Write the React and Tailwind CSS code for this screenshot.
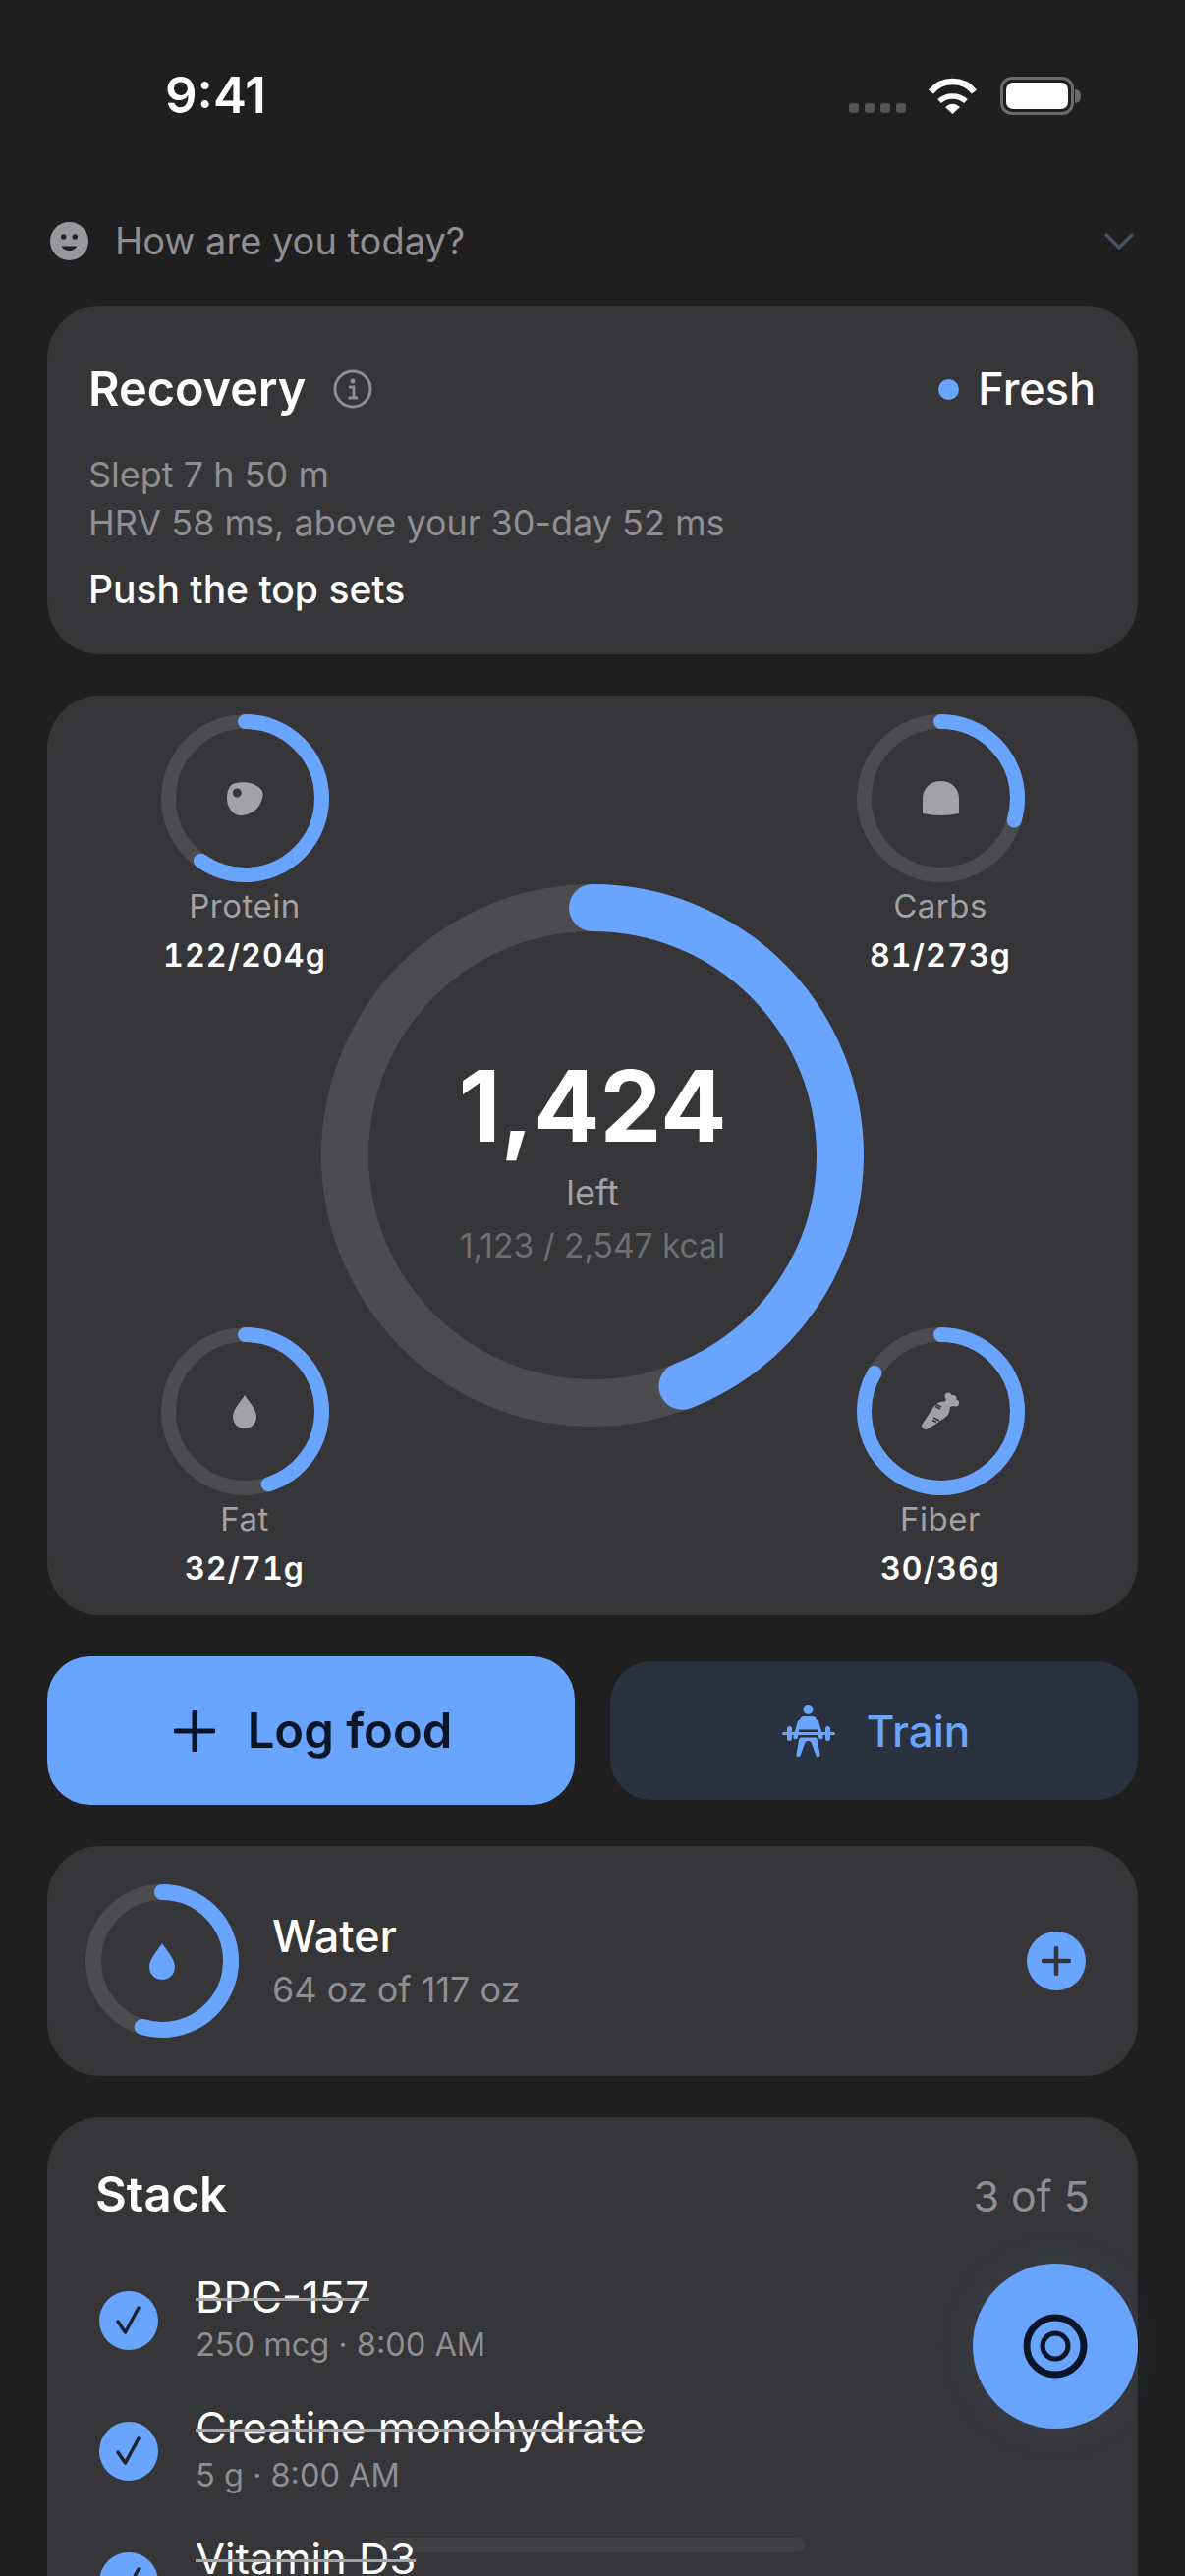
const Ring = ({ size, stroke, value, children }) => {
  const r = (size - stroke) / 2;
  return (
    <div className="relative flex shrink-0 items-center justify-center" style={{ width: size, height: size }}>
      <svg width={size} height={size} className="absolute inset-0 -rotate-90">
        <circle cx={size / 2} cy={size / 2} r={r} fill="none" stroke="#4c4c4f" strokeWidth={stroke} />
        <circle
          cx={size / 2}
          cy={size / 2}
          r={r}
          fill="none"
          stroke="#69a4ff"
          strokeWidth={stroke}
          strokeLinecap="round"
          pathLength={100}
          strokeDasharray={`${value * 100} 100`}
        />
      </svg>
      {children}
    </div>
  );
};

const Drop = ({ w, h, color }) => (
  <svg width={w} height={h} viewBox="0 0 24 34">
    <path d="M12 0C14 4 24 14 24 22C24 29 18.500 34 12 34C5.500 34 0 29 0 22C0 14 10 4 12 0Z" fill={color} />
  </svg>
);

const Macro = ({ label, amount, value, icon }) => (
  <div className="flex w-[200px] flex-col items-center">
    <Ring size={171} stroke={15} value={value}>
      {icon}
    </Ring>
    <div className="mt-1.5 text-[33px] leading-9 tracking-[0.5px] text-[#a1a1a6]">{label}</div>
    <div className="mt-[15px] text-[32px] leading-9 font-semibold tracking-[1.2px] whitespace-nowrap text-white tabular-nums">{amount}</div>
  </div>
);

const MeatIcon = () => (
  <svg width="37" height="34" viewBox="0 0 37 34">
    <path
      fillRule="evenodd"
      d="M5.700 2C11 0 17 0 22 0.700C27 1.500 31 3.500 34 6.700C36.500 9 37 12 36.300 15C35.500 19.500 33.500 23.500 30.700 26.700C26.500 31 20 34 14 34C9 34 5 31 3 27.300C1 24 0 20.500 0 16.700C0 11 1.500 5 5.700 2ZM10.300 6.500A4.500 4.500 0 1 0 10.310 6.500Z"
      fill="#a1a1a6"
    />
  </svg>
);

const BreadIcon = () => (
  <svg width="37" height="35" viewBox="0 0 37 35">
    <path d="M0 18C0 7 8 0 18.500 0C29 0 37 7 37 18V33C26 35.500 11 35.500 0 33Z" fill="#a1a1a6" />
  </svg>
);

const CarrotIcon = () => (
  <svg width="39" height="39" viewBox="0 0 39 39">
    <path
      d="M0.800 36C-0.500 34.500 0.200 33 1.500 31L13 14C16 9.500 24 8 27 11C30 14 29 21 25 25C18 30 9 36 5 38C3.500 38.500 2 37.500 0.800 36Z"
      fill="#a1a1a6"
    />
    <circle cx="27" cy="4" r="3.500" fill="#a1a1a6" />
    <circle cx="32" cy="6.500" r="3.500" fill="#a1a1a6" />
    <circle cx="34.500" cy="11" r="3.500" fill="#a1a1a6" />
    <circle cx="29" cy="10" r="5" fill="#a1a1a6" />
    <path d="M13 11.500L20 15M14 14.500L19 17M12 26L18 29M11 28.500L15 30.500" stroke="#363639" strokeWidth="1.800" fill="none" />
  </svg>
);

const LifterIcon = () => (
  <svg width="54" height="54" viewBox="0 0 54 54" fill="#69a4ff">
    <circle cx="26.500" cy="5" r="5" />
    <path d="M22 12H31C33 12 34 13 35 15L38 26H15L18 15C19 13 20 12 22 12Z" />
    <path d="M18 18L13.500 33M35 18L39.500 33" stroke="#69a4ff" strokeWidth="4.500" strokeLinecap="round" fill="none" />
    <rect x="17" y="25.500" width="19" height="2.500" fill="#2a3240" />
    <rect x="0" y="28" width="54" height="3" rx="1.500" />
    <rect x="5" y="22" width="5" height="15" rx="2.500" />
    <rect x="44" y="22" width="5" height="15" rx="2.500" />
    <path d="M19 33.500H34C35 33.500 35.500 34.500 35.800 35.500L38.500 50.500C39 53.500 35 54 34.300 51.500L29.500 38.500C28.500 36.500 24.500 36.500 23.500 38.500L18.700 51.500C18 54 14 53.500 14.500 50.500L17.200 35.500C17.500 34.500 18 33.500 19 33.500Z" />
  </svg>
);

const Check = () => (
  <div className="flex h-[60px] w-[60px] shrink-0 items-center justify-center rounded-full bg-[#69a4ff]">
    <svg width="30" height="30" viewBox="0 0 30 30" fill="none" stroke="#1c2330" strokeWidth="3.500" strokeLinecap="round" strokeLinejoin="round">
      <path d="M4 16L11.500 27L25 2" />
    </svg>
  </div>
);

const StackRow = ({ name, sub }) => (
  <div className="flex h-[98px] items-center gap-[38px] pl-1">
    <Check />
    <div className="min-h-[98px]">
      <div className="text-[43.500px] leading-[50px] text-white line-through decoration-[#a1a1a6] decoration-[3px]">{name}</div>
      {sub && <div className="text-[32.500px] leading-[48px] text-[#8e8e93]">{sub}</div>}
    </div>
  </div>
);

export default function App() {
  return (
    <div className="relative h-[2622px] w-[1206px] overflow-hidden bg-[#1f1f1f] font-[Inter,sans-serif]">
      {/* status bar */}
      <div className="flex h-[210px] items-start justify-between pt-[72px] pr-[106px] pl-[168px]">
        <div className="text-[51px] leading-[50px] font-semibold text-white">9:41</div>
        <div className="mt-1.5 flex items-center">
          <div className="mt-[25px] mr-[22px] flex gap-1.5">
            <div className="h-2.5 w-2.5 rounded-[3px] bg-[#555557]" />
            <div className="h-2.5 w-2.5 rounded-[3px] bg-[#555557]" />
            <div className="h-2.5 w-2.5 rounded-[3px] bg-[#555557]" />
            <div className="h-2.5 w-2.5 rounded-[3px] bg-[#555557]" />
          </div>
          <svg width="51" height="37" viewBox="0 0 51 37" className="mr-[23px]">
            <path d="M3.500 14.500A28.500 28.500 0 0 1 47.500 14.500" fill="none" stroke="#fff" strokeWidth="6.500" />
            <path d="M12 24A20.600 20.600 0 0 1 39 24" fill="none" stroke="#fff" strokeWidth="5.500" />
            <path d="M18 30Q25.500 23.500 33 30L25.500 37Z" fill="#fff" />
          </svg>
          <div className="flex items-center">
            <div className="h-[39px] w-[75px] rounded-[12px] border-[3px] border-[#6b6b6f] p-[3px]">
              <div className="h-full w-full rounded-[7px] bg-white" />
            </div>
            <div className="ml-px h-3.5 w-1.5 rounded-r-full bg-[#6b6b6f]" />
          </div>
        </div>
      </div>

      <div className="flex flex-col px-12">
        {/* mood */}
        <div className="mb-[31px] flex h-[70px] items-center justify-between pr-[3px] pl-[3px]">
          <div className="flex items-center gap-[27px]">
            <svg width="39" height="39" viewBox="0 0 39 39">
              <circle cx="19.500" cy="19.500" r="19.500" fill="#98989c" />
              <circle cx="13.700" cy="15" r="2.700" fill="#1f1f1f" />
              <circle cx="25.300" cy="15" r="2.700" fill="#1f1f1f" />
              <path d="M12.500 25C15.500 29.500 23.500 29.500 26.500 25Z" fill="#1f1f1f" stroke="#1f1f1f" strokeWidth="1.200" strokeLinejoin="round" />
            </svg>
            <span className="text-[38px] leading-none text-[#8e8e93]">How are you today?</span>
          </div>
          <svg width="32" height="20" viewBox="0 0 32 20" fill="none" stroke="#4b5563" strokeWidth="3.500" strokeLinecap="round" strokeLinejoin="round" className="mt-0.5">
            <path d="M3 3L16 16L29 3" />
          </svg>
        </div>

        <div className="flex flex-col gap-[42px]">
          {/* recovery */}
          <div className="h-[355px] rounded-[54px] bg-[#363639] pt-[55px] pr-[43px] pl-[42px]">
            <div className="flex items-center justify-between">
              <div className="flex items-center gap-[28px]">
                <span className="text-[48.500px] leading-[60px] font-semibold text-white">Recovery</span>
                <svg width="40" height="40" viewBox="0 0 40 40" fill="none" stroke="#8e8e93" strokeWidth="3">
                  <circle cx="20" cy="20" r="18" />
                  <circle cx="20" cy="12" r="2.500" fill="#8e8e93" stroke="none" />
                  <path d="M16 18H21V29M15.500 29H25" strokeWidth="2.800" />
                </svg>
              </div>
              <div className="flex items-center gap-[19px]">
                <div className="h-[21px] w-[21px] rounded-full bg-[#69a4ff]" />
                <span className="text-[45px] leading-[60px] font-medium text-white">Fresh</span>
              </div>
            </div>
            <div className="mt-[33px] text-[36px] leading-[49px] text-[#8e8e93]">
              <div>Slept 7 h 50 m</div>
              <div>HRV 58 ms, above your 30-day 52 ms</div>
            </div>
            <div className="mt-[18px] text-[39px] leading-[49px] font-medium text-white">Push the top sets</div>
          </div>

          {/* macros */}
          <div className="grid h-[936px] rounded-[54px] bg-[#363639]">
            <div className="col-start-1 row-start-1 flex h-[907px] flex-col justify-between self-start px-[101px] pt-[19px]">
              <div className="flex justify-between">
                <Macro label="Protein" amount="122/204g" value={122 / 204} icon={<MeatIcon />} />
                <Macro label="Carbs" amount="81/273g" value={81 / 273} icon={<BreadIcon />} />
              </div>
              <div className="flex justify-between">
                <Macro label="Fat" amount="32/71g" value={32 / 71} icon={<Drop w={24} h={34} color="#a1a1a6" />} />
                <Macro label="Fiber" amount="30/36g" value={30 / 36} icon={<CarrotIcon />} />
              </div>
            </div>
            <div className="col-start-1 row-start-1 place-self-center">
              <Ring size={552} stroke={48} value={1123 / 2547}>
                <div className="relative flex flex-col items-center pt-[10px]">
                  <div className="text-[100px] leading-[110px] font-bold text-white">1,424</div>
                  <div className="mt-[9px] text-[36px] leading-[48px] text-[#a1a1a6]">left</div>
                  <div className="mt-[6px] text-[33.500px] leading-[48px] text-[#6e6e73]">1,123 / 2,547 kcal</div>
                </div>
              </Ring>
            </div>
          </div>

          {/* actions */}
          <div className="flex items-center gap-[36px]">
            <button className="flex h-[151px] w-[537px] items-center justify-center gap-[33px] rounded-[44px] bg-[#69a4ff] pl-1">
              <svg width="42" height="42" viewBox="0 0 42 42" fill="none" stroke="#0a1628" strokeWidth="5" strokeLinecap="round">
                <path d="M21 2V40M2 21H40" />
              </svg>
              <span className="text-[49px] leading-none font-semibold text-[#0a1628]">Log food</span>
            </button>
            <button className="flex h-[141px] w-[537px] items-center justify-center gap-[32px] rounded-[42px] bg-[#2a3240] pl-1">
              <LifterIcon />
              <span className="text-[44px] leading-none font-medium text-[#69a4ff]">Train</span>
            </button>
          </div>

          {/* water */}
          <div className="flex h-[234px] items-center gap-[34px] rounded-[54px] bg-[#363639] pr-[53px] pl-[39px]">
            <Ring size={156} stroke={16} value={64 / 117}>
              <Drop w={26} h={37} color="#69a4ff" />
            </Ring>
            <div className="flex-1 pt-1">
              <div className="text-[45px] leading-[54px] font-medium text-white">Water</div>
              <div className="text-[36px] leading-[54px] text-[#8e8e93]">64 oz of 117 oz</div>
            </div>
            <div className="flex h-[60px] w-[60px] items-center justify-center rounded-full bg-[#69a4ff]">
              <svg width="30" height="30" viewBox="0 0 30 30" fill="none" stroke="#363639" strokeWidth="4.500" strokeLinecap="round">
                <path d="M15 2V28M2 15H28" />
              </svg>
            </div>
          </div>

          {/* stack */}
          <div className="h-[700px] rounded-[54px] bg-[#363639] px-[49px] pt-[47px]">
            <div className="flex items-center justify-between">
              <span className="text-[49px] leading-[60px] font-semibold text-white">Stack</span>
              <span className="pt-[3px] text-[43px] leading-[60px] text-[#8e8e93]">3 of 5</span>
            </div>
            <div className="mt-[48px] flex flex-col gap-[35px]">
              <StackRow name="BPC-157" sub="250 mcg · 8:00 AM" />
              <StackRow name="Creatine monohydrate" sub="5 g · 8:00 AM" />
              <StackRow name="Vitamin D3" />
            </div>
          </div>
        </div>
      </div>

      {/* floating button */}
      <button className="absolute top-[2304px] left-[990px] flex h-[168px] w-[168px] items-center justify-center rounded-full bg-[#69a4ff] shadow-[0_0_40px_rgba(105,164,255,0.08)]">
        <svg width="66" height="66" viewBox="0 0 66 66" fill="none" stroke="#0a1628" strokeWidth="7">
          <circle cx="33" cy="33" r="29" />
          <circle cx="33" cy="33" r="13" strokeWidth="5" />
        </svg>
      </button>

      {/* home indicator */}
      <div className="absolute top-[2583px] left-[386px] h-[15px] w-[433px] rounded-full bg-white/5" />
    </div>
  );
}
